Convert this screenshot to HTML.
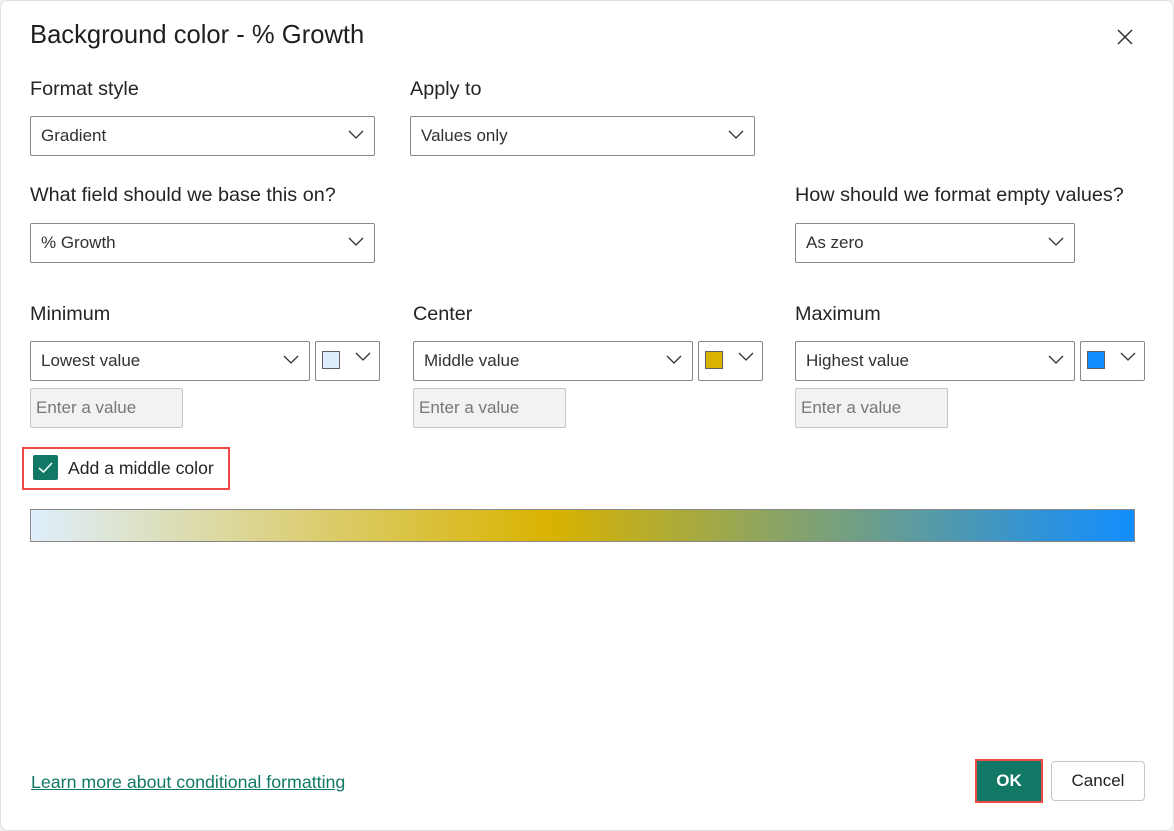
<!DOCTYPE html><html><head><style>
body{margin:0;width:1174px;height:831px;background:#f0f0f0;font-family:"Liberation Sans",sans-serif;overflow:hidden;position:relative}
.d{position:absolute;left:0;top:0;width:1174px;height:831px;background:#fff;box-shadow:inset 0 0 0 1px #e0e0e0;border-radius:8px}
.a{position:absolute}
.l{position:absolute;font-size:19.8px;color:#252423}
.dd{position:absolute;border:1px solid #8a8886;border-radius:2px;box-sizing:border-box;height:40px;font-size:17px;color:#323130;line-height:38px;padding-left:10px;background:#fff}
.dd svg{position:absolute;right:10px;top:13px}
.in{position:absolute;width:153px;height:40px;box-sizing:border-box;border:1px solid #c8c6c4;border-radius:2px;background:#f3f2f1;color:#797775;font-size:17px;line-height:38px;padding-left:5px}
.sw{position:absolute;left:6px;top:9px;width:18px;height:18px;border:1px solid #605e5c;box-sizing:border-box}
</style></head><body><div class="d">
<div class="l" style="left:30px;top:21px;font-size:25.6px;color:#201f1e">Background color - % Growth</div>
<svg class="a" style="left:1117px;top:29px" width="16" height="16"><path d="M1 1L15 15M15 1L1 15" stroke="#323130" stroke-width="1.5"/></svg>
<div class="l" style="left:30px;top:78px">Format style</div>
<div class="l" style="left:410px;top:78px">Apply to</div>
<div class="dd" style="left:30px;top:116px;width:345px">Gradient<svg width="16" height="10"><path d="M1 1L8 8L15 1" fill="none" stroke="#323130" stroke-width="1.3"/></svg></div>
<div class="dd" style="left:410px;top:116px;width:345px">Values only<svg width="16" height="10"><path d="M1 1L8 8L15 1" fill="none" stroke="#323130" stroke-width="1.3"/></svg></div>
<div class="l" style="left:30px;top:184px">What field should we base this on?</div>
<div class="l" style="left:795px;top:184px">How should we format empty values?</div>
<div class="dd" style="left:30px;top:223px;width:345px">% Growth<svg width="16" height="10"><path d="M1 1L8 8L15 1" fill="none" stroke="#323130" stroke-width="1.3"/></svg></div>
<div class="dd" style="left:795px;top:223px;width:280px">As zero<svg width="16" height="10"><path d="M1 1L8 8L15 1" fill="none" stroke="#323130" stroke-width="1.3"/></svg></div>
<div class="l" style="left:30px;top:303px">Minimum</div>
<div class="l" style="left:413px;top:303px">Center</div>
<div class="l" style="left:795px;top:303px">Maximum</div>
<div class="dd" style="left:30px;top:341px;width:280px">Lowest value<svg width="16" height="10"><path d="M1 1L8 8L15 1" fill="none" stroke="#323130" stroke-width="1.3"/></svg></div>
<div class="dd" style="left:315px;top:341px;width:65px"><div class="sw" style="background:#deeefc"></div><svg width="16" height="10" style="right:8px;top:10px"><path d="M1 1L8 8L15 1" fill="none" stroke="#323130" stroke-width="1.3"/></svg></div>
<div class="dd" style="left:413px;top:341px;width:280px">Middle value<svg width="16" height="10"><path d="M1 1L8 8L15 1" fill="none" stroke="#323130" stroke-width="1.3"/></svg></div>
<div class="dd" style="left:698px;top:341px;width:65px"><div class="sw" style="background:#d9b300"></div><svg width="16" height="10" style="right:8px;top:10px"><path d="M1 1L8 8L15 1" fill="none" stroke="#323130" stroke-width="1.3"/></svg></div>
<div class="dd" style="left:795px;top:341px;width:280px">Highest value<svg width="16" height="10"><path d="M1 1L8 8L15 1" fill="none" stroke="#323130" stroke-width="1.3"/></svg></div>
<div class="dd" style="left:1080px;top:341px;width:65px"><div class="sw" style="background:#118dff"></div><svg width="16" height="10" style="right:8px;top:10px"><path d="M1 1L8 8L15 1" fill="none" stroke="#323130" stroke-width="1.3"/></svg></div>
<div class="in" style="left:30px;top:388px">Enter a value</div>
<div class="in" style="left:413px;top:388px">Enter a value</div>
<div class="in" style="left:795px;top:388px">Enter a value</div>
<div class="a" style="left:22px;top:447px;width:208px;height:43px;border:2px solid #f04747;box-sizing:border-box"></div>
<div class="a" style="left:33px;top:455px;width:25px;height:25px;background:#117865;border-radius:2px"><svg width="25" height="25"><path d="M6 13L10.5 17L19 8" fill="none" stroke="#fff" stroke-width="1.6"/></svg></div>
<div class="l" style="left:68px;top:458px;font-size:17.6px">Add a middle color</div>
<div class="a" style="left:30px;top:509px;width:1105px;height:33px;box-sizing:border-box;border:1px solid #8a8886;background:linear-gradient(90deg,#deeefc 0%,#d9b300 47%,#118dff 100%)"></div>
<div class="a" style="left:31px;top:772px;font-size:17.8px;color:#117865;text-decoration:underline">Learn more about conditional formatting</div>
<div class="a" style="left:975px;top:759px;width:68px;height:44px;border:2px solid #f04747;box-sizing:border-box;background:#117865;color:#fff;font-weight:bold;font-size:17px;text-align:center;line-height:40px">OK</div>
<div class="a" style="left:1051px;top:761px;width:94px;height:40px;border:1px solid #c8c6c4;border-radius:4px;box-sizing:border-box;color:#201f1e;font-size:17px;text-align:center;line-height:38px">Cancel</div>
</div></body></html>
